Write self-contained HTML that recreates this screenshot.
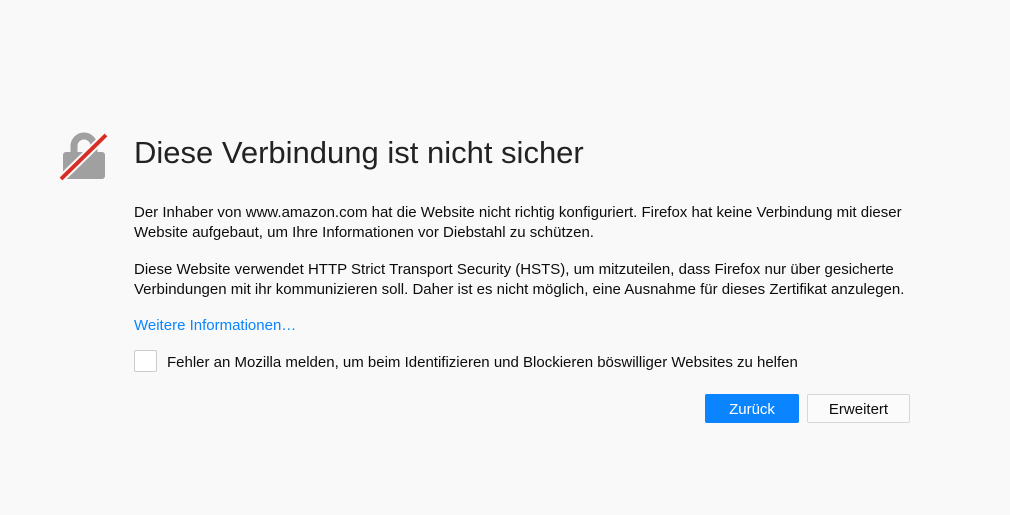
<!DOCTYPE html>
<html><head><meta charset="utf-8"><style>
html,body{margin:0;padding:0;background:#f9f9fa;width:1010px;height:515px;overflow:hidden;font-family:"Liberation Sans",sans-serif;color:#0c0c0d}
.t{position:absolute;left:134px;top:135px;font-size:31px;font-weight:300;color:#222;white-space:nowrap}
p{position:absolute;left:134px;margin:0;font-size:15px;line-height:20px;white-space:nowrap}
a{color:#0a84ff;text-decoration:none}
.cb{position:absolute;left:134px;top:350px;width:23px;height:22px;border:1px solid #ccc;border-radius:2px;background:#fff;box-sizing:border-box}
.b{position:absolute;top:394px;height:29px;box-sizing:border-box;font-size:15px;line-height:30px;text-align:center;border-radius:2px}
</style></head><body>
<svg style="position:absolute;left:55px;top:128px" width="60" height="56" viewBox="55 128 60 56">
<path d="M74 154 v-8 a10 10 0 0 1 20 0 v8" fill="none" stroke="#a0a0a0" stroke-width="7"/>
<rect x="63" y="152" width="42" height="27" rx="3" fill="#a0a0a0"/>
<line x1="61" y1="179" x2="106" y2="135" stroke="#f9f9fa" stroke-width="8"/>
<line x1="61" y1="179" x2="106" y2="135" stroke="#d92d23" stroke-width="4"/>
</svg>
<div class="t">Diese Verbindung ist nicht sicher</div>
<p style="top:203px">Der Inhaber von www.amazon.com hat die Website nicht richtig konfiguriert. Firefox hat keine Verbindung mit dieser<br>Website aufgebaut, um Ihre Informationen vor Diebstahl zu schützen.</p>
<p style="top:260px">Diese Website verwendet HTTP Strict Transport Security (HSTS), um mitzuteilen, dass Firefox nur über gesicherte<br>Verbindungen mit ihr kommunizieren soll. Daher ist es nicht möglich, eine Ausnahme für dieses Zertifikat anzulegen.</p>
<p style="top:316px"><a>Weitere Informationen…</a></p>
<div class="cb"></div>
<p style="left:167px;top:353px">Fehler an Mozilla melden, um beim Identifizieren und Blockieren böswilliger Websites zu helfen</p>
<div class="b" style="left:705px;width:94px;background:#0a84ff;color:#fff;border:1px solid #0a84ff">Zurück</div>
<div class="b" style="left:807px;width:103px;background:#fbfbfb;color:#0c0c0d;border:1px solid #d7d7db">Erweitert</div>
</body></html>
